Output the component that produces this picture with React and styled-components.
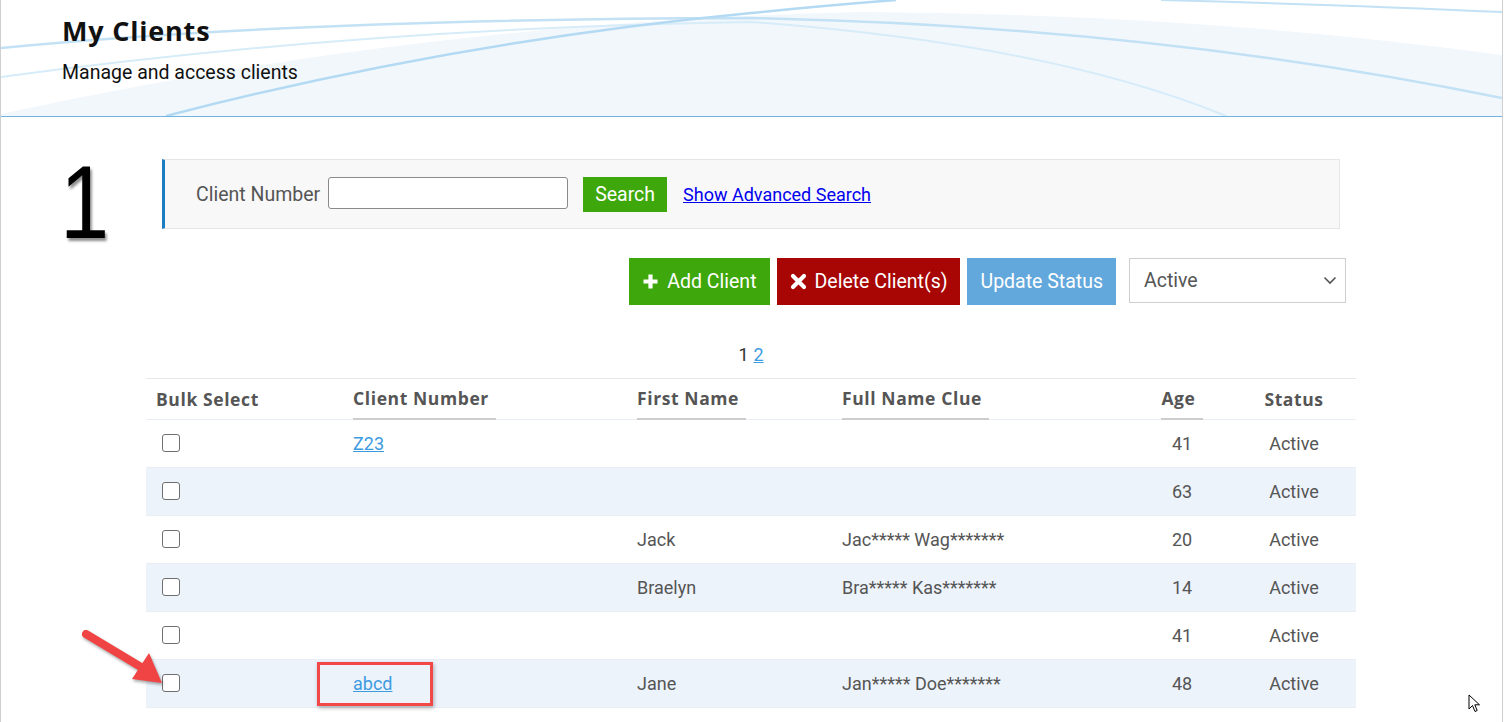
import React from "react";
import styled, { createGlobalStyle } from "styled-components";

const GlobalStyle = createGlobalStyle`
  html, body {
    margin: 0;
    padding: 0;
    background: #fff;
    font-family: Roboto, "Liberation Sans", sans-serif;
    overflow: hidden;
  }
`;

const Frame = styled.div`
  position: relative;
  width: 1501px;
  height: 722px;
  border-left: 1px solid #cfcfcf;
  border-right: 1px solid #cfcfcf;
  overflow: hidden;
`;

const Header = styled.header`
  position: relative;
  height: 116px;
  border-bottom: 1px solid #72b4e0;
  padding-left: 61px;
  box-sizing: content-box;
  overflow: hidden;
`;

const HeaderArt = styled.svg`
  position: absolute;
  left: 0;
  top: 0;
  width: 100%;
  height: 116px;
`;

const HeaderText = styled.div`
  position: relative;
  padding-top: 13px;
`;

const Title = styled.h1`
  margin: 0;
  font-family: "Open Sans", "Noto Sans", sans-serif;
  font-weight: 700;
  font-size: 27px;
  line-height: 36px;
  color: #111;
  letter-spacing: 0.8px;
`;

const Subtitle = styled.p`
  margin: 12px 0 0;
  font-size: 19.5px;
  line-height: 24px;
  color: #111;
`;

const Content = styled.main`
  position: relative;
  margin-left: 145px;
  width: 1210px;
`;

const StepNumber = styled.div`
  position: absolute;
  left: -86px;
  top: -9px;
  font-family: "Liberation Sans", Arial, sans-serif;
  font-size: 104px;
  line-height: 1;
  color: #000;
  transform: scaleX(0.85);
  transform-origin: left top;
  text-shadow: 2px 3px 3px rgba(0, 0, 0, 0.45);
`;

const SearchPanel = styled.div`
  display: flex;
  align-items: center;
  margin: 42px 0 0 16px;
  width: 1178px;
  height: 70px;
  box-sizing: border-box;
  background: #f8f8f8;
  border: 1px solid #e6e6e6;
  border-left: 3px solid #1b7dc2;
  padding-left: 31px;
`;

const Label = styled.label`
  font-size: 19.5px;
  color: #555;
  margin-right: 8px;
`;

const TextInput = styled.input`
  width: 240px;
  height: 32px;
  box-sizing: border-box;
  border: 1px solid #8a8a8a;
  border-radius: 3px;
  background: #fff;
  margin: 0 15px 2px 0;
`;

const Button = styled.button`
  display: inline-flex;
  align-items: center;
  gap: 8px;
  height: ${(p) => (p.small ? "35px" : "47px")};
  padding: 0 ${(p) => (p.small ? "12px" : "13px")};
  border: none;
  border-radius: 0;
  background: ${(p) => p.bg};
  color: #fff;
  font-family: Roboto, "Liberation Sans", sans-serif;
  font-size: 19.5px;
  cursor: pointer;
`;

const AdvancedLink = styled.a`
  margin-left: 16px;
  font-size: 18px;
  color: #0000ee;
  text-decoration: underline;
`;

const Actions = styled.div`
  display: flex;
  justify-content: flex-end;
  align-items: flex-start;
  gap: 7px;
  margin-top: 29px;
  padding-right: 10px;
`;

const StatusSelect = styled.div`
  display: flex;
  align-items: center;
  justify-content: space-between;
  margin-left: 6px;
  width: 217px;
  height: 45px;
  box-sizing: border-box;
  border: 1px solid #cfcfcf;
  padding: 0 8px 0 14px;
  font-size: 19.5px;
  color: #555;
  background: #fff;
`;

const Pager = styled.div`
  margin: 40px 0 13px;
  text-align: center;
  font-size: 18px;
  line-height: 20px;
  color: #333;
`;

const PageLink = styled.a`
  color: #3d9be0;
  text-decoration: underline;
  margin-left: 5px;
`;

const Table = styled.div`
  border-top: 1px solid #e8e8e8;
`;

const Row = styled.div`
  display: grid;
  grid-template-columns: 197px 284px 205px 300px 100px 124px;
  align-items: center;
  height: ${(p) => (p.head ? "41px" : "48px")};
  background: ${(p) => (p.alt ? "#edf3fb" : "#fff")};
  border-bottom: 1px solid #e9eef4;
  box-sizing: border-box;
`;

const HeadCell = styled.div`
  align-self: stretch;
  display: flex;
  align-items: center;
  justify-content: ${(p) => (p.center ? "center" : "flex-start")};
  padding-left: ${(p) => (p.center ? "0" : "10px")};
`;

const HeadLabel = styled.span`
  display: flex;
  align-items: center;
  height: 100%;
  box-sizing: border-box;
  padding: 0 ${(p) => (p.plain ? "0" : "7px")} 2px 0;
  border-bottom: ${(p) => (p.plain ? "none" : "2px solid #cdcdcd")};
  margin-bottom: -1px;
  font-family: "Open Sans", "Noto Sans", sans-serif;
  font-weight: 700;
  font-size: 17.5px;
  letter-spacing: 0.6px;
  color: #555;
`;

const Cell = styled.div`
  position: relative;
  padding-left: ${(p) => (p.center ? "0" : "10px")};
  text-align: ${(p) => (p.center ? "center" : "left")};
  font-size: 18px;
  color: #555;
`;

const Check = styled.span`
  display: block;
  width: 18px;
  height: 18px;
  margin: -2px 0 0 6px;
  box-sizing: border-box;
  border: 1.5px solid #6f6f6f;
  border-radius: 3px;
  background: #fff;
`;

const ClientLink = styled.a`
  color: #3d9be0;
  text-decoration: underline;
`;

const Highlight = styled.span`
  position: absolute;
  left: -26px;
  top: -11px;
  width: 116px;
  height: 44px;
  box-sizing: border-box;
  border: 3px solid #f24848;
  box-shadow: 1px 2px 4px rgba(0, 0, 0, 0.3);
`;

const Arrow = styled.svg`
  position: absolute;
  left: 70px;
  top: 620px;
  width: 100px;
  height: 72px;
  overflow: visible;
`;

const Cursor = styled.svg`
  position: absolute;
  left: 1467px;
  top: 694px;
  width: 13px;
  height: 20px;
`;

const clients = [
  { num: "Z23", first: "", clue: "", age: 41, status: "Active" },
  { num: "", first: "", clue: "", age: 63, status: "Active" },
  { num: "", first: "Jack", clue: "Jac***** Wag*******", age: 20, status: "Active" },
  { num: "", first: "Braelyn", clue: "Bra***** Kas*******", age: 14, status: "Active" },
  { num: "", first: "", clue: "", age: 41, status: "Active" },
  { num: "abcd", first: "Jane", clue: "Jan***** Doe*******", age: 48, status: "Active", mark: true },
  { num: "", first: "", clue: "", age: "", status: "" },
];

function PlusIcon() {
  return (
    <svg width="17" height="17" viewBox="0 0 17 17">
      <path d="M8.5 1.5v14M1.5 8.5h14" stroke="#fff" strokeWidth="4.2" />
    </svg>
  );
}

function CrossIcon() {
  return (
    <svg width="17" height="17" viewBox="0 0 17 17">
      <path d="M3 3l11 11M14 3L3 14" stroke="#fff" strokeWidth="4.2" strokeLinecap="round" />
    </svg>
  );
}

export default function App() {
  return (
    <Frame>
      <GlobalStyle />
      <Header>
        <HeaderArt viewBox="0 0 1501 116" preserveAspectRatio="none">
          <path d="M0 114 Q 420 22 860 12 Q 1200 14 1501 55 L1501 116 L0 116 Z" fill="#f2f7fc" />
          <path d="M0 48 Q 300 19 750 18 Q 1150 26 1501 98" fill="none" stroke="#c3e1f5" strokeWidth="2.5" />
          <path d="M0 77 Q 360 28 750 22 Q 1050 44 1225 116" fill="none" stroke="#d6ecf9" strokeWidth="2" />
          <path d="M165 116 Q 450 42 750 13 Q 830 5 895 0" fill="none" stroke="#b3daf2" strokeWidth="2.5" />
          <path d="M1160 0 Q 1350 5 1501 12" fill="none" stroke="#c3e1f5" strokeWidth="2" />
        </HeaderArt>
        <HeaderText>
          <Title>My Clients</Title>
          <Subtitle>Manage and access clients</Subtitle>
        </HeaderText>
      </Header>

      <Content>
        <StepNumber>1</StepNumber>
        <SearchPanel>
          <Label>Client Number</Label>
          <TextInput />
          <Button small bg="#3ea70b">Search</Button>
          <AdvancedLink href="#">Show Advanced Search</AdvancedLink>
        </SearchPanel>

        <Actions>
          <Button bg="#3ea70b">
            <PlusIcon />
            Add Client
          </Button>
          <Button bg="#a80505">
            <CrossIcon />
            Delete Client(s)
          </Button>
          <Button bg="#62a8dc">Update Status</Button>
          <StatusSelect>
            Active
            <svg width="14" height="9" viewBox="0 0 14 9">
              <path d="M1.5 1.5l5.5 5.5 5.5-5.5" fill="none" stroke="#555" strokeWidth="1.6" />
            </svg>
          </StatusSelect>
        </Actions>

        <Pager>
          1<PageLink href="#">2</PageLink>
        </Pager>

        <Table>
          <Row head>
            <HeadCell>
              <HeadLabel plain>Bulk Select</HeadLabel>
            </HeadCell>
            <HeadCell>
              <HeadLabel>Client Number</HeadLabel>
            </HeadCell>
            <HeadCell>
              <HeadLabel>First Name</HeadLabel>
            </HeadCell>
            <HeadCell>
              <HeadLabel>Full Name Clue</HeadLabel>
            </HeadCell>
            <HeadCell center>
              <HeadLabel>Age</HeadLabel>
            </HeadCell>
            <HeadCell center>
              <HeadLabel plain>Status</HeadLabel>
            </HeadCell>
          </Row>
          {clients.map((c, i) => (
            <Row key={i} alt={i % 2 === 1}>
              <Cell>
                <Check />
              </Cell>
              <Cell>
                {c.num && <ClientLink href="#">{c.num}</ClientLink>}
                {c.mark && <Highlight />}
              </Cell>
              <Cell>{c.first}</Cell>
              <Cell>{c.clue}</Cell>
              <Cell center>{c.age}</Cell>
              <Cell center>{c.status}</Cell>
            </Row>
          ))}
        </Table>
      </Content>

      <Arrow viewBox="0 0 100 72">
        <g filter="drop-shadow(1px 2px 1.5px rgba(0,0,0,0.35))">
          <path d="M15 14 L70 47" stroke="#f04444" strokeWidth="8" strokeLinecap="round" />
          <path d="M61 59 L78 33 L91 63 Z" fill="#f04444" />
        </g>
      </Arrow>

      <Cursor viewBox="0 0 13 20">
        <path d="M1 1 L1 15 L4.5 11.5 L7 17.5 L9.2 16.5 L6.8 10.8 L11.5 10.8 Z" fill="#fff" stroke="#000" strokeWidth="1" strokeLinejoin="round" />
      </Cursor>
    </Frame>
  );
}
